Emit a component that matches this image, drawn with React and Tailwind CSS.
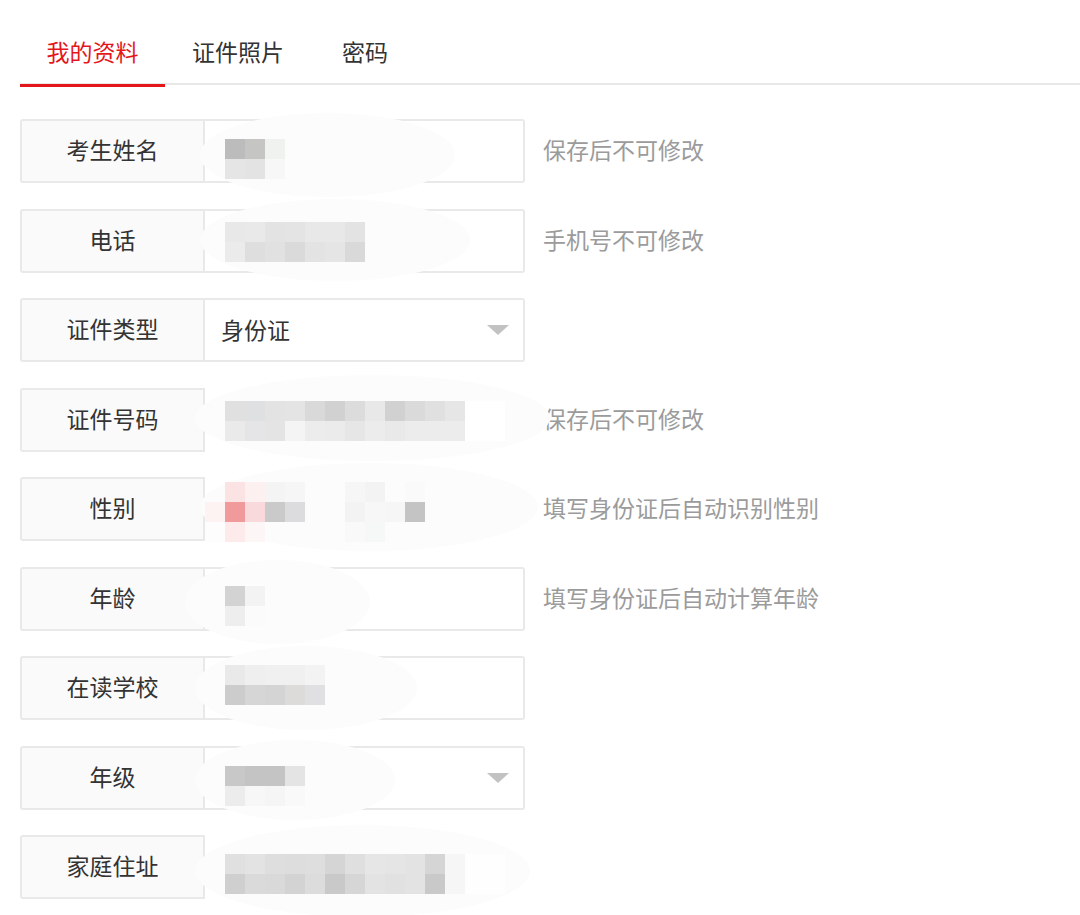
import React from "react";

const Tri = () => (
  <svg width="22" height="10" viewBox="0 0 22 10">
    <polygon points="0,0 22,0 11,10" fill="#c2c2c2" />
  </svg>
);

function Mosaic({ cells, className }) {
  return (
    <div className={"absolute z-20 flex flex-col " + className}>
      {cells.map((row, i) => (
        <div key={i} className="flex">
          {row.map((c, j) => (
            <div key={j} className={"w-[20px] h-[20px] " + (c || "bg-transparent")} />
          ))}
        </div>
      ))}
    </div>
  );
}

function Row({ label, value, select, hint, blob, mosaic, mosaicPos, hideBorder }) {
  return (
    <div className="relative flex items-center">
      <div className="flex w-[505px] h-[64px]">
        <div className="w-[185px] shrink-0 bg-[#fafafa] border-2 border-[#e9e9e9] rounded-l-[3px] flex items-center justify-center pb-[3px] text-[23px] text-[#333]">
          {label}
        </div>
        <div
          className={
            "flex-1 flex items-center justify-between pl-[16px] pr-[14px] text-[23px] text-[#333] border-y-2 border-r-2 rounded-r-[3px] " +
            (hideBorder ? "border-transparent" : "border-[#e9e9e9]")
          }
        >
          <span className="pb-[1px]">{value}</span>
          {select && <Tri />}
        </div>
      </div>
      {hint && <div className="ml-[18px] pb-[3px] text-[23px] text-[#9b9b9b]">{hint}</div>}
      {blob && <div className={"absolute z-10 bg-[#fcfcfc] rounded-[50%] " + blob} />}
      {mosaic && <Mosaic cells={mosaic} className={mosaicPos} />}
    </div>
  );
}

export default function App() {
  return (
    <div className="w-[1080px] h-[915px] overflow-hidden bg-white font-['Noto_Sans_CJK_SC','Liberation_Sans',sans-serif]">
      <div className="ml-[20px] flex h-[85px] border-b-2 border-[#e8e8e8]">
        <div className="w-[145px] h-[87px] -mb-[2px] border-b-[3px] border-[#e4161b] flex justify-center pt-[34px] text-[23px] leading-[34px] text-[#e4161b]">
          我的资料
        </div>
        <div className="w-[146px] flex justify-center pt-[34px] text-[23px] leading-[34px] text-[#333]">
          证件照片
        </div>
        <div className="w-[108px] flex justify-center pt-[34px] text-[23px] leading-[34px] text-[#333]">
          密码
        </div>
      </div>

      <div className="ml-[20px] mt-[34px] flex flex-col gap-[25.5px]">
        <Row
          label="考生姓名"
          hint="保存后不可修改"
          blob="left-[180px] -top-[6px] w-[255px] h-[84px]"
          mosaicPos="left-[205px] top-[20px]"
          mosaic={[
            ["bg-[#bcbcbc]", "bg-[#c5c5c3]", "bg-[#f0f2f0]"],
            ["bg-[#e5e5e5]", "bg-[#e3e3e3]", "bg-[#f7f7f7]"],
          ]}
        />
        <Row
          label="电话"
          hint="手机号不可修改"
          blob="left-[180px] -top-[10px] w-[270px] h-[82px]"
          mosaicPos="left-[205px] top-[13px]"
          mosaic={[
            ["bg-[#e8e8e8]", "bg-[#e9e9e9]", "bg-[#e3e3e3]", "bg-[#e4e4e4]", "bg-[#e8e8e8]", "bg-[#e8e8e8]", "bg-[#e3e3e3]"],
            ["bg-[#ebebeb]", "bg-[#dedede]", "bg-[#e1e1e1]", "bg-[#dadada]", "bg-[#e3e3e3]", "bg-[#e5e5e5]", "bg-[#d9d9d9]"],
          ]}
        />
        <Row label="证件类型" value="身份证" select />
        <Row
          label="证件号码"
          hint="保存后不可修改"
          hideBorder
          blob="left-[175px] -top-[13px] w-[355px] h-[86px]"
          mosaicPos="left-[205px] top-[13px]"
          mosaic={[
            ["bg-[#e0e0e0]", "bg-[#dfe0e2]", "bg-[#e3e3e3]", "bg-[#e4e4e4]", "bg-[#d9d9d9]", "bg-[#d1d1d1]", "bg-[#dcdcdc]", "bg-[#e8e8e8]", "bg-[#d1d1d1]", "bg-[#dadada]", "bg-[#e0e0e0]", "bg-[#e6e6e6]", "bg-white", "bg-white"],
            ["bg-[#eaeaea]", "bg-[#e5e5e7]", "bg-[#e4e4e4]", "bg-[#f4f4f4]", "bg-[#ececec]", "bg-[#ebebeb]", "bg-[#e6e6e6]", "bg-[#ececec]", "bg-[#e9e9e9]", "bg-[#ececec]", "bg-[#ececec]", "bg-[#ececec]", "bg-white", "bg-white"],
          ]}
        />
        <Row
          label="性别"
          hint="填写身份证后自动识别性别"
          hideBorder
          blob="left-[180px] -top-[14px] w-[338px] h-[88px]"
          mosaicPos="left-[185px] top-[5px]"
          mosaic={[
            [null, "bg-[#fbe3e3]", "bg-[#fcf0f0]", "bg-[#f4f4f4]", "bg-[#f6f6f6]", null, null, "bg-[#f6f6f6]", "bg-[#f3f3f3]", null, "bg-[#fafafa]"],
            ["bg-[#fdf3f3]", "bg-[#f09a9c]", "bg-[#f9d9dc]", "bg-[#cacaca]", "bg-[#dcdcde]", null, null, "bg-[#f3f3f3]", "bg-[#f7f7f7]", "bg-[#f6f6f6]", "bg-[#c4c4c4]"],
            ["bg-[#fdfdfd]", "bg-[#fdeaea]", "bg-[#fdf6f6]", null, null, null, null, "bg-[#f9f9f9]", "bg-[#f6f8f7]", null, null],
          ]}
        />
        <Row
          label="年龄"
          hint="填写身份证后自动计算年龄"
          blob="left-[165px] -top-[7px] w-[185px] h-[84px]"
          mosaicPos="left-[205px] top-[19px]"
          mosaic={[
            ["bg-[#d3d3d3]", "bg-[#f3f3f3]"],
            ["bg-[#eeeeee]", "bg-[#fbfbfb]"],
          ]}
        />
        <Row
          label="在读学校"
          blob="left-[175px] -top-[10px] w-[222px] h-[84px]"
          mosaicPos="left-[205px] top-[9px]"
          mosaic={[
            ["bg-[#e9e9e9]", "bg-[#efefef]", "bg-[#f0f0f0]", "bg-[#f0f0f0]", "bg-[#f3f3f3]"],
            ["bg-[#cccccc]", "bg-[#d6d6d6]", "bg-[#d4d4d4]", "bg-[#dcdbd9]", "bg-[#e0e0e2]"],
          ]}
        />
        <Row
          label="年级"
          select
          blob="left-[175px] -top-[6px] w-[200px] h-[80px]"
          mosaicPos="left-[205px] top-[20px]"
          mosaic={[
            ["bg-[#c8c8c8]", "bg-[#c4c4c4]", "bg-[#c4c4c4]", "bg-[#e4e4e4]"],
            ["bg-[#ececec]", "bg-[#f7f7f7]", "bg-[#f5f5f5]", "bg-[#f9f9f9]"],
          ]}
        />
        <Row
          label="家庭住址"
          hideBorder
          blob="left-[175px] -top-[10px] w-[335px] h-[92px]"
          mosaicPos="left-[205px] top-[19px]"
          mosaic={[
            ["bg-[#e0e0e0]", "bg-[#e3e3e3]", "bg-[#dedede]", "bg-[#dddddd]", "bg-[#dedede]", "bg-[#d5d5d5]", "bg-[#dfdfdf]", "bg-[#e6e6e6]", "bg-[#e5e5e5]", "bg-[#e3e3e3]", "bg-[#d5d5d5]", "bg-[#f6f6f6]", "bg-[#fefefe]", "bg-[#fefefe]"],
            ["bg-[#cfcfcf]", "bg-[#dadada]", "bg-[#d9d9d9]", "bg-[#d3d3d3]", "bg-[#dcdcdc]", "bg-[#c9c9c9]", "bg-[#d6d6d6]", "bg-[#e3e3e3]", "bg-[#e1e1e1]", "bg-[#e3e3e3]", "bg-[#c9c9c9]", "bg-[#f6f6f6]", "bg-[#fefefe]", "bg-[#fefefe]"],
          ]}
        />
      </div>
    </div>
  );
}
